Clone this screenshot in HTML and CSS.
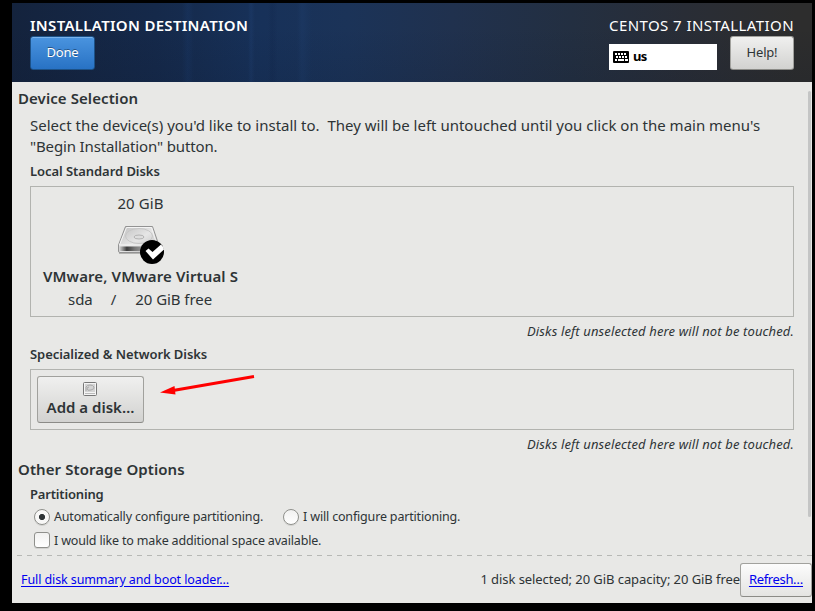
FILE: index.html
```html
<!DOCTYPE html>
<html lang="en">
<head>
<meta charset="utf-8">
<title>Installation Destination</title>
<link rel="stylesheet" href="styles.css">
</head>
<body>
<div class="screen">
  <header class="top">
    <div class="top-left">
      <h1 class="title">INSTALLATION DESTINATION</h1>
      <button class="btn btn-done">Done</button>
    </div>
    <div class="top-right">
      <div class="product">CENTOS 7 INSTALLATION</div>
      <div class="tools">
        <div class="layout">
          <svg width="16" height="12" viewBox="0 0 16 12"><rect width="16" height="12" rx="1" fill="#000"/><path d="M2 3h2M5 3h2M8 3h2M11 3h2M3 6h2M6 6h2M9 6h2M12 6h2M2 9h2M5 9h6M12 9h3" stroke="#fff" stroke-width="2"/></svg>
          <span>us</span>
        </div>
        <button class="btn btn-help">Help!</button>
      </div>
    </div>
  </header>
  <main class="content">
    <h2 class="h2 h-device">Device Selection</h2>
    <p class="intro"><span class="line line1">Select the device(s) you'd like to install to.&nbsp; They will be left untouched until you click on the main menu's</span><span class="line line2">"Begin Installation" button.</span></p>
    <h3 class="h3 h-local">Local Standard Disks</h3>
    <section class="box box-local">
      <div class="disk">
        <div class="size">20 GiB</div>
        <svg class="disk-icon" width="48" height="42" viewBox="0 0 48 42">
          <defs>
            <linearGradient id="top" x1="0" y1="0" x2="1" y2="1"><stop offset="0" stop-color="#bdbdbd"/><stop offset=".5" stop-color="#e6e6e6"/><stop offset="1" stop-color="#b5b5b5"/></linearGradient>
            <linearGradient id="front" x1="0" x2="1"><stop offset="0" stop-color="#ddd"/><stop offset=".2" stop-color="#3c3c3c"/><stop offset=".4" stop-color="#777"/><stop offset=".6" stop-color="#999"/><stop offset="1" stop-color="#333"/></linearGradient>
          </defs>
          <path d="M2 29h38" stroke="#b4b4b2" stroke-width="2"/>
          <path d="M8.500 2.500h27l6.500 19v6q0 1-1 1h-38q-1.500 0-1.500-1.500v-6z" fill="url(#top)" stroke="#929292"/>
          <path d="M2 22.500h39v4.500h-39z" fill="url(#front)"/>
          <path d="M9.500 3.500h25l5.500 17.500h-37.500z" fill="none" stroke="#f4f4f4"/>
          <ellipse cx="22" cy="12" rx="13.500" ry="7.500" fill="none" stroke="#c6c6c6"/>
          <ellipse cx="22" cy="13" rx="5" ry="2" fill="#ddd" stroke="#b2b2b2"/>
          <circle cx="35" cy="28" r="12" fill="#000"/>
          <path d="M28.500 27l3-2.500 4 3.500 8.500-7.500q2 1.500 3 5l-11 10z" fill="#fff"/>
        </svg>
        <div class="disk-name">VMware, VMware Virtual S</div>
        <div class="disk-info"><span class="dev">sda</span><span class="slash">/</span><span class="free">20 GiB free</span></div>
      </div>
    </section>
    <p class="note">Disks left unselected here will not be touched.</p>
    <h3 class="h3 h-special">Specialized &amp; Network Disks</h3>
    <section class="box box-special">
      <button class="btn btn-add">
        <svg width="14" height="14" viewBox="0 0 14 14"><rect x=".5" y=".5" width="13" height="13" rx="1" fill="#f4f4f4" stroke="#777"/><rect x="2" y="2" width="10" height="8" fill="#d4d4d4"/><path d="M3 9V5q1-2 4-2t4 2-3 3-4-1 2-2" fill="none" stroke="#aaa"/><path d="M2 11.500h10" stroke="#bbb"/></svg>
        <span>Add a disk…</span>
      </button>
      <svg class="arrow" width="100" height="24" viewBox="0 0 100 24"><path d="M13 16.500L94 2.500" stroke="#f00" stroke-width="3"/><path d="M0 18.500L14.500 12L15.500 20.500z" fill="#f00"/></svg>
    </section>
    <p class="note">Disks left unselected here will not be touched.</p>
    <h2 class="h2 h-other">Other Storage Options</h2>
    <h3 class="h3 h-part">Partitioning</h3>
    <div class="options">
      <label class="option auto"><i class="mark radio on"></i><span>Automatically configure partitioning.</span></label>
      <label class="option manual"><i class="mark radio"></i><span>I will configure partitioning.</span></label>
    </div>
    <div class="options last">
      <label class="option space"><i class="mark"></i><span>I would like to make additional space available.</span></label>
    </div>
    <div class="scrollbar"></div>
  </main>
  <div class="dash"></div>
  <footer class="foot">
    <a class="link summary">Full disk summary and boot loader…</a>
    <span class="capacity">1 disk selected; 20 GiB capacity; 20 GiB free</span>
    <button class="btn btn-refresh"><span class="link">Refresh…</span></button>
  </footer>
</div>
</body>
</html>
```
FILE: styles.css
```css
* { box-sizing: border-box; }
body { margin: 0; padding: 3px 3px 8px 12px; height: 611px; background: #000; color: #2e3436; font: 13px/18px "Noto Sans", "Open Sans", sans-serif; overflow: hidden; white-space: nowrap; }
h1, h2, h3, p { margin: 0; }
button { font: inherit; color: inherit; }
svg { display: block; flex: none; }
.screen { width: 800px; height: 600px; display: flex; flex-direction: column; background: #e8e8e6; }
.top { height: 79px; flex: none; display: flex; justify-content: space-between; padding: 12px 18px 0; color: #fff;
  background:
    linear-gradient(transparent 30%, rgba(10,20,40,.12)),
    linear-gradient(90deg, transparent 170px, rgba(30,70,130,.18) 176px, transparent 182px 236px, rgba(40,80,140,.18) 239px, transparent 243px 256px, rgba(10,25,60,.15) 260px, transparent 266px 285px, rgba(40,80,140,.15) 290px, transparent 300px),
    linear-gradient(90deg, #14233d 0, #15294a 18%, #173159 31%, #1b3358 42%, #20314e 55%, #232f41 70%, #292d36 84%, #2d2d2d 98%); }
.title, .product { height: 21px; font-size: 15px; line-height: 21px; }
.title { font-weight: 600; letter-spacing: .31px; }
.product { letter-spacing: .43px; }
.btn { display: flex; align-items: center; justify-content: center; padding: 0; border: 1px solid #a1a19d; border-bottom-color: #8b8b87; border-radius: 3px; background: linear-gradient(#f0f0ef, #d2d2d0); }
.btn-done { width: 65px; height: 34px; padding-bottom: 2px; border-color: #1c5187; color: #fff; background: linear-gradient(#4a94df, #2872c4); box-shadow: inset 0 1px #79b2ea; text-shadow: 0 -1px rgba(0,0,0,.4); letter-spacing: -.2px; }
.tools { display: flex; align-items: flex-end; justify-content: space-between; width: 185px; }
.layout { width: 108px; height: 26px; display: flex; align-items: center; gap: 4px; padding: 0 0 0 4px; background: #fff; color: #000; font-weight: 700; letter-spacing: -.6px; }
.layout span { padding-bottom: 2px; }
.btn-help { width: 64px; height: 34px; padding-bottom: 2px; color: #2e3436; letter-spacing: -.2px; }
.content { position: relative; flex: none; height: 470px; padding: 0 18px; }
.h2 { margin-left: -12px; font-size: 15px; font-weight: 600; letter-spacing: .08px; }
.h-device { line-height: 33px; }
.intro { font-size: 15px; line-height: 21px; }
.line { display: block; }
.line2 { letter-spacing: -.14px; }
.h3 { font-size: 13px; font-weight: 600; letter-spacing: -.06px; }
.h-local { line-height: 29px; }
.box { border: 1px solid #b2b3af; }
.box-local { height: 131px; padding-left: 12px; }
.disk { width: 195px; font-size: 15px; display: flex; flex-direction: column; align-items: center; }
.size { height: 37px; line-height: 33px; letter-spacing: .1px; }
.disk-icon { margin: 0 0 -2px 1px; }
.disk-name { height: 24px; line-height: 24px; font-weight: 600; letter-spacing: .12px; }
.disk-info { width: 100%; display: flex; line-height: 23px; padding-left: 25px; letter-spacing: -.05px; }
.slash { margin: 0 19px 0 18px; }
.note { text-align: right; font-style: italic; line-height: 29px; letter-spacing: .13px; }
.h-special { height: 23px; line-height: 16px; }
.box-special { height: 61px; display: flex; padding: 6px; }
.btn-add { width: 107px; height: 47px; flex-direction: column; font-size: 15px; font-weight: 600; line-height: 21px; gap: 1px; }
.btn-add svg { margin-right: 1px; }
.arrow { margin: -2px 0 0 16px; }
.h-other { height: 22px; line-height: 20px; }
.h-part { height: 24px; padding-top: 4px; letter-spacing: -.17px; }
.options { display: flex; height: 24px; gap: 20px; padding: 0 0 1px 4px; }
.last { height: 23px; }
.last span { padding-top: 2px; }
.option { display: flex; align-items: center; gap: 4px; font-size: 12.500px; letter-spacing: -.17px; }
.mark { width: 16px; height: 16px; flex: none; border: 1px solid #8f908c; border-radius: 3px; background: linear-gradient(#f1f1f0, #fff); box-shadow: 0 1px #d2d2d0; }
.radio { border-radius: 50%; }
.on { background: radial-gradient(circle, #2e3436 0 2.700px, #f8f8f7 3.500px); }
.scrollbar { position: absolute; right: 1px; top: 9px; width: 3px; height: 426px; border-radius: 2px; background: #c4c5c5; }
.dash { height: 1px; flex: none; margin: 3px 0 0 5px; background: repeating-linear-gradient(90deg, #b7b8b5 0 5px, transparent 5px 10px); }
.foot { height: 47px; display: flex; align-items: center; padding-left: 9px; }
.link { color: #00e; text-decoration: underline; text-underline-offset: 2px; }
.summary { font-size: 12.500px; letter-spacing: -.1px; }
.capacity { margin-left: auto; padding-bottom: 2px; letter-spacing: -.07px; }
.btn-refresh { width: 72px; height: 34px; padding-bottom: 2px; background: linear-gradient(#fcfcfc, #e4e4e2); letter-spacing: -.35px; }
```
